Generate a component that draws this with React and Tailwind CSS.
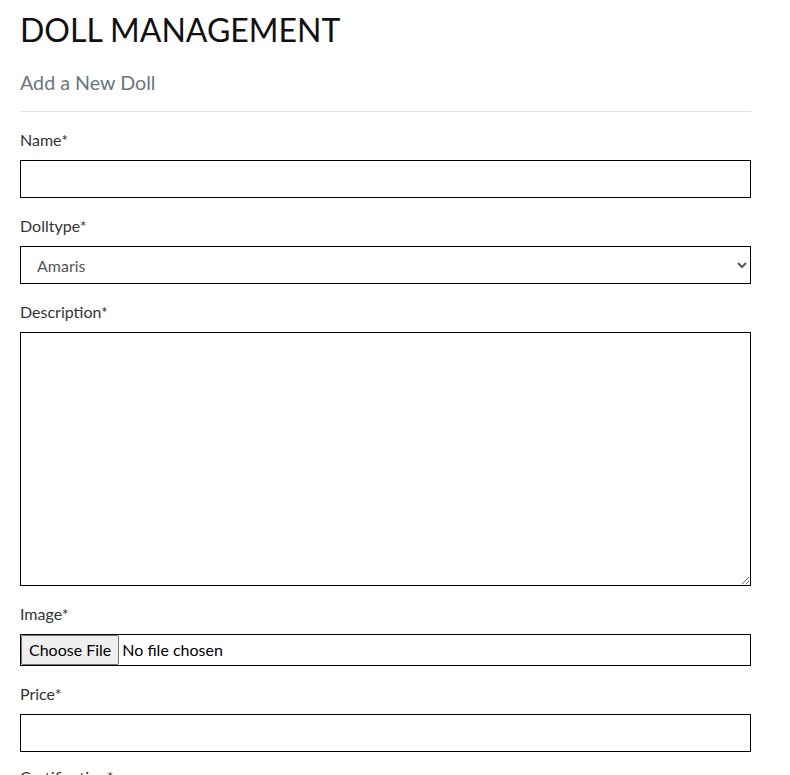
export default function App() {
  return (
    <div className="min-h-screen bg-white text-[#333] font-['Lato',sans-serif]">
      <div className="w-[731px] ml-5 pt-[11px]">
        {/* Page header */}
        <h1 className="text-[32px] leading-[38px] font-normal text-[#111]">DOLL MANAGEMENT</h1>
        <h2 className="mt-[22px] text-[19.7px] leading-[24px] text-[#6c757d]">Add a New Doll</h2>
        <hr className="mt-[16px] mb-[16px] border-t border-[#dee2e6]" />

        <form className="flex flex-col">
          <div className="mb-4">
            <label className="block text-base leading-6 mb-2">Name*</label>
            <input type="text" className="block w-full h-[38px] border border-black px-3 outline-none" />
          </div>

          <div className="mb-4">
            <label className="block text-base leading-6 mb-2">Dolltype*</label>
            <select className="block w-full h-[38px] border border-black pl-3 pr-2 text-base text-[#555] bg-white outline-none">
              <option>Amaris</option>
              <option>Ember</option>
            </select>
          </div>

          <div className="mb-4">
            <label className="block text-base leading-6 mb-2">Description*</label>
            <textarea className="block w-full h-[254px] border border-black px-3 py-2 outline-none" />
          </div>

          <div className="mb-4">
            <label className="block text-base leading-6 mb-2">Image*</label>
            <input
              type="file"
              className="block w-full h-[32px] border border-black text-base text-black file:h-[30px] file:px-[7px] file:mr-[3px] file:border file:border-solid file:border-[#767676] file:rounded-[2px] file:bg-[#efefef] file:text-base file:text-black file:font-['Lato',sans-serif]"
            />
          </div>

          <div className="mb-[13px]">
            <label className="block text-base leading-6 mb-2">Price*</label>
            <input type="text" className="block w-full h-[38px] border border-black px-3 outline-none" />
          </div>

          <div className="mb-4">
            <label className="block text-base leading-6 mb-2">Certification*</label>
            <input type="text" className="block w-full h-[38px] border border-black px-3 outline-none" />
          </div>
        </form>
      </div>
    </div>
  )
}
